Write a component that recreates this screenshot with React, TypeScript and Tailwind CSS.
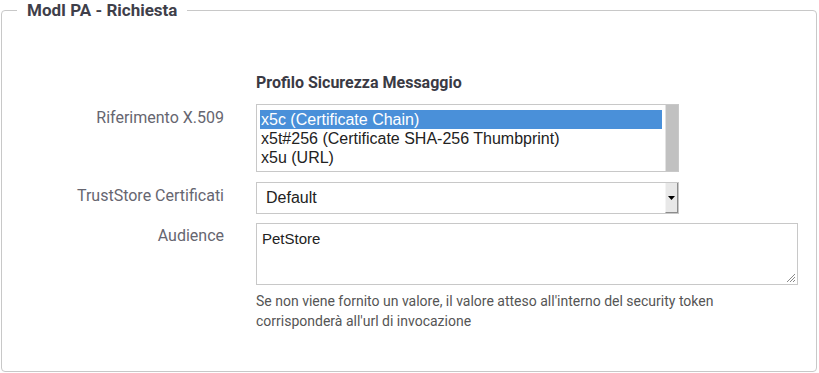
import React from "react";

const options = [
  "x5c (Certificate Chain)",
  "x5t#256 (Certificate SHA-256 Thumbprint)",
  "x5u (URL)",
];

const Label = ({ children }: { children: React.ReactNode }) => (
  <div className="w-[222px] shrink-0 text-right text-[16px] leading-[20px] text-[#666670]">
    {children}
  </div>
);

export default function App() {
  return (
    <div className="h-[373px] w-[819px] bg-white pl-[1px] pr-[2px] font-['Roboto',sans-serif]">
      <fieldset className="h-[372px] rounded-[4px] border border-[#c8c8c8] px-0">
        <legend className="ml-[15px] px-[10px] text-[17px] font-bold leading-[20px] text-[#3f3f4a]">
          ModI PA - Richiesta
        </legend>

        <div className="mt-[53px] pl-[254px] text-[16px] font-bold leading-[20px] text-[#3a3a44]">
          Profilo Sicurezza Messaggio
        </div>

        {/* Riferimento X.509 */}
        <div className="mt-[11px] flex gap-[32px]">
          <div className="pt-[4px]">
            <Label>Riferimento X.509</Label>
          </div>
          <div className="flex h-[68px] w-[423px] border border-[#c8c8c8] bg-white">
            <div className="flex-1 pl-[3px] pr-[3px] pt-[5px] font-['Liberation_Sans',Arial,sans-serif] text-[16px] text-[#222]">
              {options.map((o, i) => (
                <div
                  key={o}
                  className={`h-[19px] pl-[1px] leading-[19px] ${
                    i === 0 ? "bg-[#4a90d9] text-white" : ""
                  }`}
                >
                  {o}
                </div>
              ))}
            </div>
            <div className="w-[13px] border-l border-[#e2e2e2] bg-[#c1c1c1]" />
          </div>
        </div>

        {/* TrustStore */}
        <div className="mt-[10px] flex gap-[32px]">
          <div className="pt-[4px]">
            <Label>TrustStore Certificati</Label>
          </div>
          <div className="flex h-[32px] w-[423px] border border-[#c8c8c8] bg-white">
            <div className="flex flex-1 items-center pl-[9px] font-['Liberation_Sans',Arial,sans-serif] text-[16px] text-[#222]">
              Default
            </div>
            <div className="flex w-[13px] items-center justify-center border-l border-[#f4f4f4] border-r border-r-[#8c8c8c] border-b border-b-[#8c8c8c] bg-[#e8e8e8]">
              <svg width="7" height="4" viewBox="0 0 7 4">
                <path d="M0 0h7L3.5 4z" fill="#000" />
              </svg>
            </div>
          </div>
        </div>

        {/* Audience */}
        <div className="mt-[9px] flex gap-[32px]">
          <div className="pt-[3px]">
            <Label>Audience</Label>
          </div>
          <div>
            <div className="relative h-[62px] w-[542px] border border-[#c8c8c8] bg-white px-[5px] pt-[6px] font-['Liberation_Sans',Arial,sans-serif] text-[15px] leading-[18px] text-[#222]">
              PetStore
              <svg
                className="absolute bottom-[1px] right-[1px]"
                width="10"
                height="10"
                viewBox="0 0 10 10"
              >
                <path d="M9 1L1 9M9 4L4 9M9 7L7 9" stroke="#8a8a8a" strokeWidth="1" />
              </svg>
            </div>
            <div className="mt-[6px] text-[14px] leading-[20px] text-[#555]">
              Se non viene fornito un valore, il valore atteso all'interno del security token
              <br />
              corrisponderà all'url di invocazione
            </div>
          </div>
        </div>
      </fieldset>
    </div>
  );
}
